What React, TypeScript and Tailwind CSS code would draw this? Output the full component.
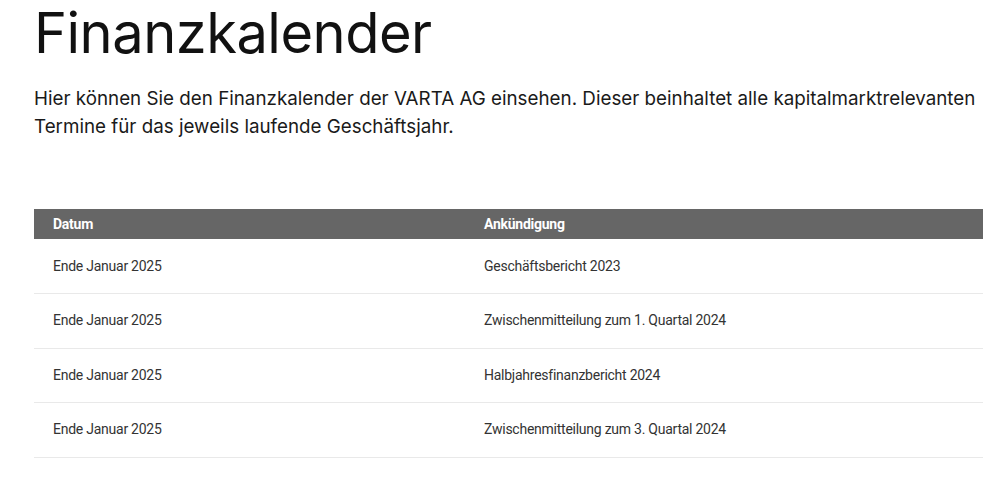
const rows = [
  { date: 'Ende Januar 2025', title: 'Geschäftsbericht 2023' },
  { date: 'Ende Januar 2025', title: 'Zwischenmitteilung zum 1. Quartal 2024' },
  { date: 'Ende Januar 2025', title: 'Halbjahresfinanzbericht 2024' },
  { date: 'Ende Januar 2025', title: 'Zwischenmitteilung zum 3. Quartal 2024' },
]

export default function App() {
  return (
    <div className="min-h-[477px] bg-white pl-[34px] pr-[17px] font-['Inter',sans-serif] text-[#111]">
      <h1 className="pt-[1px] text-[56px] font-normal leading-[64px] tracking-[-0.5px]">Finanzkalender</h1>
      <p className="mt-[20px] text-[18.8px] leading-[28px] text-[#1a1a1a]">
        Hier können Sie den Finanzkalender der VARTA AG einsehen. Dieser beinhaltet alle kapitalmarktrelevanten Termine für das jeweils laufende Geschäftsjahr.
      </p>

      <table className="mt-[68px] w-full border-collapse font-['Roboto',sans-serif] text-[14px] tracking-[-0.25px] text-[#333]">
        <thead>
          <tr className="h-[30px] bg-[#666666] text-left text-white">
            <th className="w-[431px] pl-[19px] font-bold">Datum</th>
            <th className="pl-[19px] font-bold">Ankündigung</th>
          </tr>
        </thead>
        <tbody>
          {rows.map((r, i) => (
            <tr key={i} className="h-[54.5px] border-b border-[#e9e9e9]">
              <td className="pl-[19px]">{r.date}</td>
              <td className="pl-[19px]">{r.title}</td>
            </tr>
          ))}
        </tbody>
      </table>
    </div>
  )
}
